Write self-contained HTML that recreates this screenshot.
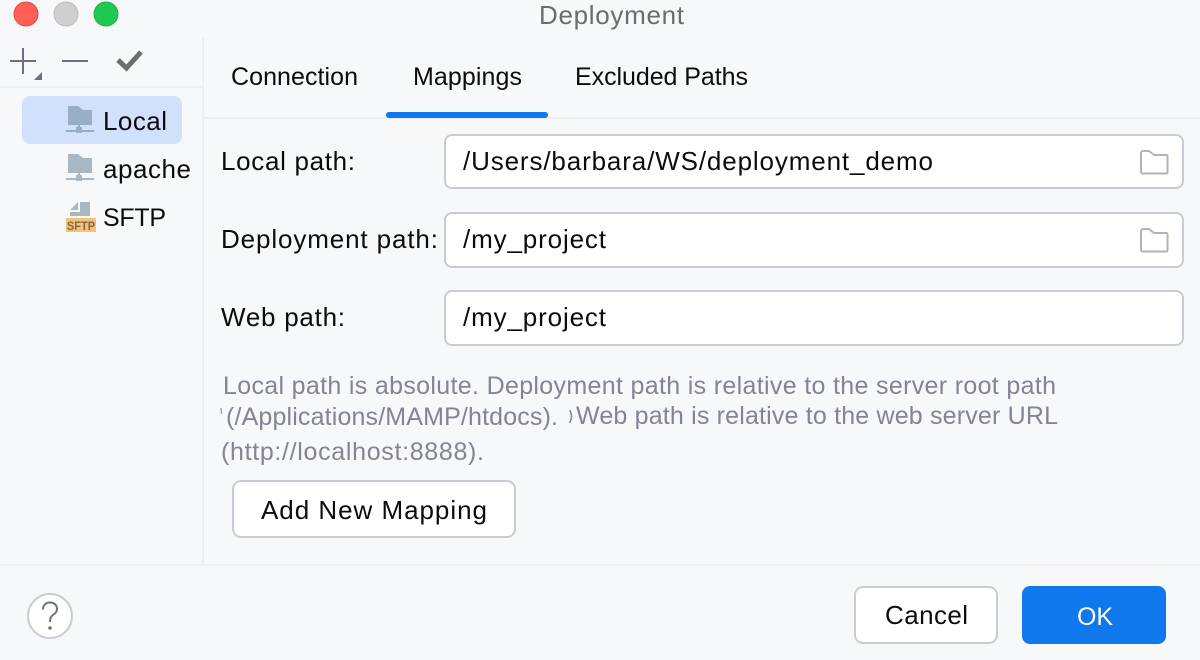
<!DOCTYPE html>
<html><head><meta charset="utf-8"><title>Deployment</title>
<style>
html,body{margin:0;padding:0;width:1200px;height:660px;overflow:hidden;background:#f7f8fa}
svg{display:block}
text{font-family:"Liberation Sans",sans-serif;font-size:26px;fill:#0c0c0e}
.t{font-size:25px}
.h{fill:#818594;font-size:25px}
.r{fill:#fff;stroke:#c9ccd6;stroke-width:2}
.f{fill:none;stroke:#afb2c2;stroke-width:2;stroke-linejoin:round}
</style></head><body>
<svg width="1200" height="660" viewBox="0 0 1200 660" xmlns="http://www.w3.org/2000/svg">
<rect width="1200" height="660" fill="#f7f8fa"/>
<!-- traffic lights -->
<circle cx="26" cy="14" r="12" fill="#fe5f57" stroke="#e5484a" stroke-width="1"/>
<circle cx="66" cy="14" r="12" fill="#cfcfcf" stroke="#bcbcbc" stroke-width="1"/>
<circle cx="106" cy="14" r="12" fill="#1dc94f" stroke="#19b545" stroke-width="1"/>
<text x="539" y="24" textLength="145" lengthAdjust="spacing" style="fill:#6c6c70">Deployment</text>
<!-- dividers -->
<rect x="202" y="38" width="2" height="526" fill="#eceef2"/>
<rect x="0" y="86" width="202" height="2" fill="#eceef2"/>
<rect x="204" y="117" width="996" height="2" fill="#eceef2"/>
<rect x="0" y="564" width="1200" height="2" fill="#eceef2"/>
<!-- toolbar -->
<path d="M23 48V74M10 61H36" stroke="#6c707e" stroke-width="2" fill="none"/>
<path d="M42 72V80H34Z" fill="#6c707e"/>
<path d="M62 61H88" stroke="#6c707e" stroke-width="2" fill="none"/>
<path d="M118 60L126.500 68L141 52" stroke="#6e6e6e" stroke-width="5" fill="none"/>
<!-- tree -->
<rect x="22" y="96" width="160" height="48" rx="8" fill="#d2e1fb"/>
<path d="M68 106H78L83 110H92V125H68Z" fill="#97aec8"/>
<path d="M66 131H94" stroke="#97aec8" stroke-width="2"/><rect x="78" y="125" width="2" height="4" fill="#97aec8"/><rect x="76" y="127" width="6" height="6" fill="#97aec8"/>
<text x="103" y="130" textLength="64" lengthAdjust="spacing">Local</text>
<path d="M68 154H78L83 158H92V173H68Z" fill="#a9b7c3"/>
<path d="M66 179H94" stroke="#a9b7c3" stroke-width="2"/><rect x="78" y="173" width="2" height="4" fill="#a9b7c3"/><rect x="76" y="175" width="6" height="6" fill="#a9b7c3"/>
<text x="103" y="178" textLength="88" lengthAdjust="spacing">apache</text>
<path d="M70 210L78 202V210Z" fill="#a9b7c3"/><path d="M80 202H90V216H70V212H80Z" fill="#a9b7c3"/>
<rect x="66" y="218" width="30" height="14" fill="#f7c078"/>
<text x="67" y="230" textLength="28" lengthAdjust="spacingAndGlyphs" style="font-size:12px;font-weight:bold;fill:#7a6a4a">SFTP</text>
<text class="t" x="103" y="226" textLength="63" lengthAdjust="spacing">SFTP</text>
<!-- tabs -->
<text class="t" x="231" y="85" textLength="127" lengthAdjust="spacing">Connection</text>
<text class="t" x="413" y="85" textLength="109" lengthAdjust="spacing">Mappings</text>
<text class="t" x="575" y="85" textLength="173" lengthAdjust="spacing">Excluded Paths</text>
<rect x="386" y="112" width="162" height="6" rx="3" fill="#0e78ec"/>
<!-- form -->
<text x="221" y="170" textLength="134" lengthAdjust="spacing">Local path:</text>
<rect class="r" x="445" y="135" width="738" height="53" rx="7"/>
<text x="463" y="170" textLength="470" lengthAdjust="spacing">/Users/barbara/WS/deployment_demo</text>
<path class="f" d="M1143 151H1149L1154 155H1166C1167 155 1167.500 155.500 1167.500 156.500V172C1167.500 173 1167 173.500 1166 173.500H1143C1142 173.500 1141 173 1141 172V153C1141 152 1142 151 1143 151Z"/>
<text x="221" y="248" textLength="217" lengthAdjust="spacing">Deployment path:</text>
<rect class="r" x="445" y="213" width="738" height="54" rx="7"/>
<text x="463" y="248" textLength="143" lengthAdjust="spacing">/my_project</text>
<path class="f" d="M1143 229H1149L1154 233H1166C1167 233 1167.500 233.500 1167.500 234.500V250C1167.500 251 1167 251.500 1166 251.500H1143C1142 251.500 1141 251 1141 250V231C1141 230 1142 229 1143 229Z"/>
<text x="221" y="326" textLength="124" lengthAdjust="spacing">Web path:</text>
<rect class="r" x="445" y="291" width="738" height="54" rx="7"/>
<text x="463" y="326" textLength="143" lengthAdjust="spacing">/my_project</text>
<!-- help -->
<text class="h" x="223" y="394" textLength="833" lengthAdjust="spacing">Local path is absolute. Deployment path is relative to the server root path</text>
<path d="M221 408L221.500 414" stroke="#a4a8b4" stroke-width="1.500" fill="none"/>
<text class="h" x="226" y="425" textLength="332" lengthAdjust="spacing">(/Applications/MAMP/htdocs).</text>
<path d="M569.500 410Q573.500 416 569.500 423" stroke="#818594" stroke-width="1.500" fill="none"/>
<text class="h" x="576" y="424" textLength="482" lengthAdjust="spacing">Web path is relative to the web server URL</text>
<text class="h" x="221" y="460" textLength="263" lengthAdjust="spacing">(http://localhost:8888).</text>
<!-- buttons -->
<rect class="r" x="233" y="481" width="282" height="56" rx="8"/>
<text x="261" y="519" textLength="226" lengthAdjust="spacing">Add New Mapping</text>
<circle class="r" cx="50" cy="616" r="22"/>
<path d="M43 609.500C43 605 46 602.500 50 602.500C54 602.500 57 605 57 609C57 612 55 613.500 53 615C51 616.500 50 618 50 622" fill="none" stroke="#6c707e" stroke-width="2"/>
<circle cx="50" cy="628" r="1.800" fill="#6c707e"/>
<rect class="r" x="855" y="587" width="142" height="56" rx="8"/>
<text x="885" y="624" textLength="83" lengthAdjust="spacing">Cancel</text>
<rect x="1022" y="586" width="144" height="58" rx="8" fill="#0e78ec"/>
<text class="t" x="1077" y="625" textLength="36" lengthAdjust="spacing" style="fill:#fff">OK</text>
</svg>
</body></html>
